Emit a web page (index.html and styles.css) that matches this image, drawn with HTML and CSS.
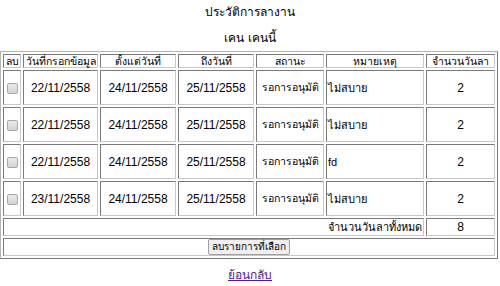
FILE: index.html
```html
<!DOCTYPE html>
<html>
<head>
<meta charset="utf-8">
<link rel="stylesheet" href="styles.css">
</head>
<body>
<div class="title">ประวัติการลางาน</div>
<div class="name">เคน เคนนี้</div>
<table class="leave">
  <colgroup>
    <col class="c1"><col class="c2"><col class="c3"><col class="c4"><col class="c5"><col class="c6"><col class="c7">
  </colgroup>
  <tr class="head">
    <td>ลบ</td><td>วันที่กรอกข้อมูล</td><td>ตั้งแต่วันที่</td><td>ถึงวันที่</td><td>สถานะ</td><td>หมายเหตุ</td><td>จำนวนวันลา</td>
  </tr>
  <tr class="row">
    <td><span class="chk"></span></td><td class="date">22/11/2558</td><td class="date">24/11/2558</td><td class="date">25/11/2558</td><td>รอการอนุมัติ</td><td class="note">ไม่สบาย</td><td class="date">2</td>
  </tr>
  <tr class="row">
    <td><span class="chk"></span></td><td class="date">22/11/2558</td><td class="date">24/11/2558</td><td class="date">25/11/2558</td><td>รอการอนุมัติ</td><td class="note">ไม่สบาย</td><td class="date">2</td>
  </tr>
  <tr class="row">
    <td><span class="chk"></span></td><td class="date">22/11/2558</td><td class="date">24/11/2558</td><td class="date">25/11/2558</td><td>รอการอนุมัติ</td><td class="note">fd</td><td class="date">2</td>
  </tr>
  <tr class="row">
    <td><span class="chk"></span></td><td class="date">23/11/2558</td><td class="date">24/11/2558</td><td class="date">25/11/2558</td><td>รอการอนุมัติ</td><td class="note">ไม่สบาย</td><td class="date">2</td>
  </tr>
  <tr class="total">
    <td colspan="6" class="right">จำนวนวันลาทั้งหมด</td><td class="date">8</td>
  </tr>
  <tr class="btnrow">
    <td colspan="7"><button class="btn" type="button">ลบรายการที่เลือก</button></td>
  </tr>
</table>
<div class="back"><a href="#" class="link">ย้อนกลับ</a></div>
</body>
</html>
```
FILE: styles.css
```css
html, body {
  margin: 0;
  padding: 0;
  background: #ffffff;
}
body {
  font-family: "Liberation Sans", "Noto Sans", sans-serif;
  font-size: 10.5px;
  color: #000;
}
.title {
  text-align: center;
  padding-top: 4px;
  height: 22px;
  line-height: 16px;
  font-size: 12px;
}
.name {
  text-align: center;
  padding-top: 4px;
  height: 21px;
  line-height: 16px;
  font-size: 12px;
}
.leave {
  width: 498px;
  table-layout: fixed;
  border-collapse: separate;
  border-spacing: 2px;
  border: 1px solid;
  border-color: #b4b4b4 #7a7a7a #7a7a7a #b4b4b4;
}
.c1 { width: 18px; }
.c2 { width: 75px; }
.c3 { width: 76px; }
.c4 { width: 76px; }
.c5 { width: 68px; }
.c6 { width: 98px; }
.c7 { width: 69px; }
.leave td {
  border: 1px solid;
  border-color: #7a7a7a #c8c8c8 #c8c8c8 #7a7a7a;
  padding: 0 1px;
  text-align: center;
  white-space: nowrap;
  box-sizing: border-box;
}
.head td {
  height: 14px;
  line-height: 12px;
  padding: 0;
}
.row td {
  height: 35px;
}
.row .date, .total .date {
  font-size: 12px;
}
.row .note {
  text-align: left;
  font-size: 11px;
}
.total td {
  height: 18px;
  line-height: 14px;
  font-size: 11px;
}
.leave .right {
  text-align: right;
}
.btnrow td {
  height: 18px;
  padding: 0;
  line-height: 14px;
}
.chk {
  display: inline-block;
  width: 9px;
  height: 9px;
  border: 1px solid #a8a8a8;
  border-radius: 2px;
  background: linear-gradient(#e9e9e9, #d4d4d4);
  vertical-align: middle;
}
.btn {
  font-family: inherit;
  font-size: 10px;
  height: 16px;
  line-height: 12px;
  padding: 0 3px;
  background: #efefef;
  border: 1px solid #a0a0a0;
  border-radius: 2px;
  color: #000;
  vertical-align: middle;
}
.back {
  text-align: center;
  padding-top: 6px;
}
.link {
  color: #551a8b;
  font-size: 12px;
}
```
